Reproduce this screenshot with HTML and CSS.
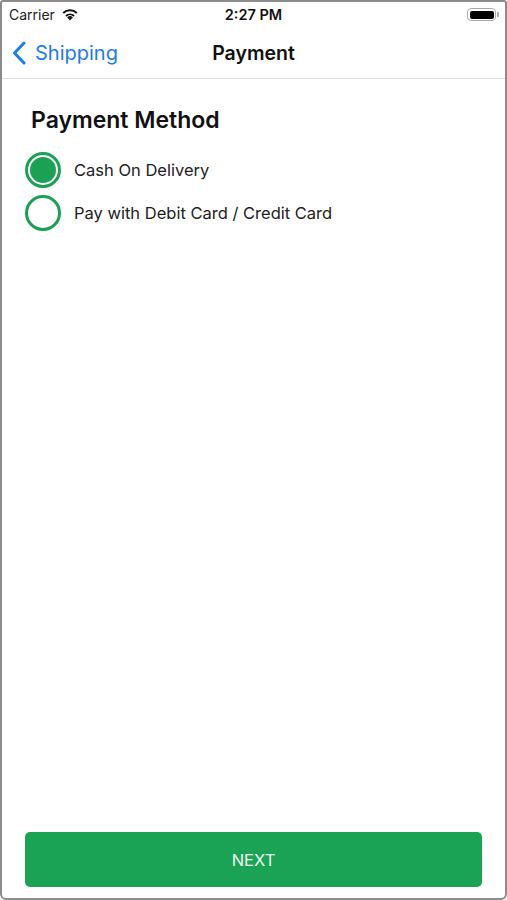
FILE: index.html
```html
<!DOCTYPE html>
<html lang="en">
<head>
    <meta charset="UTF-8">
    <meta name="viewport" content="width=device-width, initial-scale=1.0">
    <title>Payment</title>
    <link rel="stylesheet" href="styles.css">
</head>
<body>
    <div class="device">
        <!-- Status bar -->
        <div class="status-bar">
            <div class="carrier">
                Carrier
                <svg class="wifi" width="18" height="13" viewBox="0 0 18 13">
                    <path d="M9 12.5 L6.2 9.4 A4 4 0 0 1 11.8 9.4 Z" fill="#111"/>
                    <path d="M4.3 7.3 A6.8 6.8 0 0 1 13.7 7.3 L12.4 8.7 A5 5 0 0 0 5.6 8.7 Z" fill="#111"/>
                    <path d="M1.5 4.3 A10.8 10.8 0 0 1 16.5 4.3 L15.1 5.8 A8.8 8.8 0 0 0 2.9 5.8 Z" fill="#111"/>
                </svg>
            </div>
            <div class="clock">2:27 PM</div>
            <div class="battery">
                <span class="battery-body"><span class="battery-level"></span></span>
                <span class="battery-tip"></span>
            </div>
        </div>

        <!-- Navigation bar -->
        <div class="nav-bar">
            <div class="back">
                <svg width="14" height="24" viewBox="0 0 14 24">
                    <path d="M12 2 L2.5 12 L12 22" fill="none" stroke="#1a7cf5" stroke-width="3" stroke-linecap="round" stroke-linejoin="round"/>
                </svg>
                <span>Shipping</span>
            </div>
            <div class="nav-title">Payment</div>
        </div>

        <!-- Content -->
        <div class="content">
            <h2 class="section-title">Payment Method</h2>
            <div class="radio-list">
                <label class="radio-row">
                    <span class="radio checked"></span>
                    <span class="radio-label">Cash On Delivery</span>
                </label>
                <label class="radio-row">
                    <span class="radio"></span>
                    <span class="radio-label">Pay with Debit Card / Credit Card</span>
                </label>
            </div>
        </div>

        <div class="footer">
            <button class="next-btn">NEXT</button>
        </div>
    </div>
</body>
</html>
```

FILE: styles.css
```css
html, body {
    margin: 0;
    padding: 0;
    background: #fff;
}
body {
    font-family: "Inter", "Roboto", sans-serif;
    color: #111;
}
.device {
    box-sizing: border-box;
    width: 507px;
    height: 900px;
    border: 2px solid #8c8c8c;
    border-radius: 3px 3px 6px 6px;
    display: flex;
    flex-direction: column;
    overflow: hidden;
}
.status-bar {
    height: 25px;
    display: flex;
    align-items: center;
    justify-content: space-between;
    padding: 0 6px 0 7px;
    font-size: 14px;
    position: relative;
}
.carrier {
    display: flex;
    align-items: center;
    gap: 6px;
    color: #222;
}
.clock {
    position: absolute;
    left: 0;
    right: 0;
    text-align: center;
    font-weight: 600;
    font-size: 14.5px;
    pointer-events: none;
}
.battery {
    display: flex;
    align-items: center;
}
.battery-body {
    box-sizing: border-box;
    width: 29px;
    height: 13px;
    border: 1.5px solid #aaa;
    border-radius: 4px;
    padding: 1.5px;
    display: flex;
}
.battery-level {
    flex: 1;
    background: #000;
    border-radius: 2px;
}
.battery-tip {
    width: 2px;
    height: 5px;
    background: #aaa;
    border-radius: 0 1px 1px 0;
    margin-left: 1px;
}
.nav-bar {
    height: 51px;
    display: flex;
    align-items: center;
    position: relative;
    border-bottom: 1px solid #dcdcdc;
}
.back {
    display: flex;
    align-items: center;
    gap: 9px;
    padding-left: 10px;
    color: #1a7cf5;
    font-size: 20px;
}
.nav-title {
    position: absolute;
    left: 0;
    right: 0;
    text-align: center;
    font-size: 19.5px;
    font-weight: 600;
    pointer-events: none;
}
.content {
    flex: 1;
    padding: 27px 23px 0 23px;
}
.section-title {
    margin: 0 0 18px 6px;
    font-size: 23px;
    line-height: 28px;
    font-weight: 600;
}
.radio-list {
    display: flex;
    flex-direction: column;
    gap: 7px;
}
.radio-row {
    display: flex;
    align-items: center;
    gap: 13px;
}
.radio {
    box-sizing: border-box;
    width: 36px;
    height: 36px;
    border-radius: 50%;
    border: 3px solid #1aa153;
    padding: 2px;
    display: flex;
}
.radio.checked::after {
    content: "";
    flex: 1;
    border-radius: 50%;
    background: #1aa153;
}
.radio-label {
    font-size: 16.5px;
    color: #222;
}
.footer {
    padding: 0 23px 11px 23px;
}
.next-btn {
    width: 100%;
    height: 55px;
    border: none;
    border-radius: 5px;
    background: #1aa354;
    color: #eefaf1;
    font-family: "Inter", "Roboto", sans-serif;
    font-size: 16.5px;
}
```
